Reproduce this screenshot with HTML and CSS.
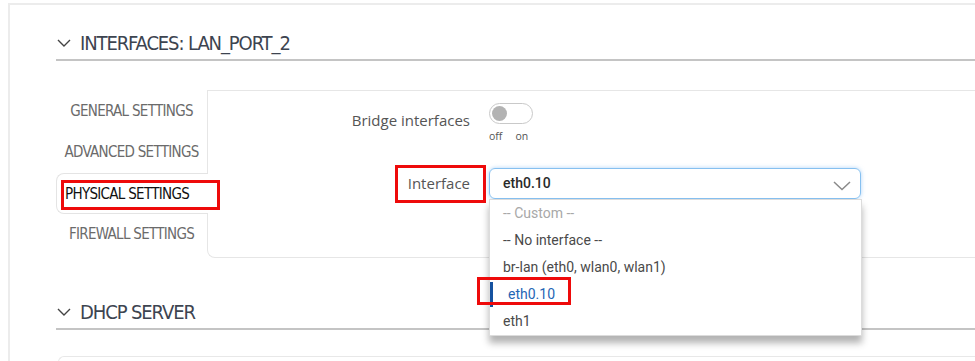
FILE: index.html
```html
<!DOCTYPE html>
<html lang="en">

<head>
    <meta charset="UTF-8">
    <meta name="viewport" content="width=device-width, initial-scale=1.0">
    <title>Interfaces: LAN_PORT_2</title>
    <link rel="stylesheet" href="styles.css">
</head>

<body>
    <div class="card">
        <div class="section-head">
            <svg class="chevron" width="14" height="8" viewBox="0 0 14 8">
                <polyline points="1,1 7,7 13,1" />
            </svg>
            <h2>INTERFACES: LAN_PORT_2</h2>
        </div>

        <div class="tabs-wrap">
            <ul class="tabs">
                <li>GENERAL SETTINGS</li>
                <li>ADVANCED SETTINGS</li>
                <li class="active"><span class="mark mark-tab">PHYSICAL SETTINGS</span></li>
                <li>FIREWALL SETTINGS</li>
            </ul>

            <div class="panel">
                <div class="field field-bridge">
                    <label>Bridge interfaces</label>
                    <div>
                        <div class="switch"><span class="knob"></span></div>
                        <div class="switch-labels">
                            <small>off</small>
                            <small>on</small>
                        </div>
                    </div>
                </div>

                <div class="field field-iface">
                    <label><span class="mark mark-label">Interface</span></label>
                    <div class="select">
                        <span class="value">eth0.10</span>
                        <svg class="select-arrow" width="18" height="10" viewBox="0 0 18 10">
                            <polyline points="1,1 9,8.5 17,1" />
                        </svg>
                        <ul class="options">
                            <li class="muted">-- Custom --</li>
                            <li>-- No interface --</li>
                            <li>br-lan (eth0, wlan0, wlan1)</li>
                            <li class="current"><span class="mark mark-option">eth0.10</span></li>
                            <li>eth1</li>
                        </ul>
                    </div>
                </div>
            </div>
        </div>

        <div class="section-head section-dhcp">
            <svg class="chevron" width="14" height="8" viewBox="0 0 14 8">
                <polyline points="1,1 7,7 13,1" />
            </svg>
            <h2>DHCP SERVER</h2>
        </div>

        <div class="next-card"></div>
    </div>
</body>

</html>
```

FILE: styles.css
```css
* {
    box-sizing: border-box;
    margin: 0;
    padding: 0;
}

body {
    background-color: #fff;
    font-family: 'Open Sans', sans-serif;
    color: #555;
    overflow: hidden;
}

.card {
    margin: 3px 0 0 8px;
    border-top: 2px solid #ececec;
    border-left: 2px solid #ececec;
    padding-left: 46px;
    height: 400px;
}

.section-head {
    display: flex;
    align-items: center;
    height: 34px;
    margin-top: 22px;
    border-bottom: 2px solid #c4c4c4;
}

.section-head h2 {
    font-family: 'Liberation Sans Narrow', 'DejaVu Sans Condensed', sans-serif;
    font-weight: 400;
    font-size: 20px;
    letter-spacing: -1.1px;
    color: #3d4450;
    margin-left: 9px;
}

.chevron {
    margin-left: 1px;
    fill: none;
    stroke: #444;
    stroke-width: 1.4;
}

.tabs-wrap {
    display: flex;
    margin-top: 29px;
}

.tabs {
    list-style-type: none;
    width: 151px;
    flex-shrink: 0;
    padding-top: 1px;
}

.tabs li {
    height: 41px;
    line-height: 41px;
    text-align: center;
    font-family: 'Liberation Sans Narrow', 'DejaVu Sans Condensed', sans-serif;
    font-size: 15px;
    letter-spacing: -0.7px;
    color: #6b6b6b;
    white-space: nowrap;
}

.tabs li.active {
    position: relative;
    z-index: 1;
    margin-right: -1px;
    background-color: #fff;
    border: 1px solid #e4e4e4;
    border-right: 0;
    border-radius: 8px 0 0 8px;
    color: #111;
    text-align: left;
    padding-left: 8px;
}

.panel {
    flex: 1;
    height: 168px;
    border: 1px solid #e6e6e6;
    border-right: 0;
    border-bottom-left-radius: 8px;
    padding-top: 12px;
}

.field {
    display: grid;
    grid-template-columns: 262px 372px;
    column-gap: 19px;
    align-items: start;
}

.field label {
    text-align: right;
    font-size: 15px;
    color: #555;
}

.field-bridge label {
    line-height: 20px;
    padding-top: 7px;
}

.field-iface {
    margin-top: 25px;
}

.field-iface label {
    line-height: 30px;
}

.switch {
    position: relative;
    width: 44px;
    height: 21px;
    border: 1.5px solid #c9c9c9;
    border-radius: 11px;
    background-color: #fff;
}

.knob {
    position: absolute;
    top: 1.5px;
    left: 2px;
    width: 15px;
    height: 15px;
    border-radius: 50%;
    background-color: #b3b3b3;
}

.switch-labels {
    display: flex;
    gap: 13px;
    margin-top: 5px;
    line-height: 14px;
}

.switch-labels small {
    font-size: 10.5px;
    color: #555;
}

.select {
    position: relative;
    height: 31px;
    border: 1px solid #86c0f0;
    border-radius: 6px;
    box-shadow: 0 0 4px rgba(110, 175, 240, 0.55);
    font-family: Roboto, 'Liberation Sans', sans-serif;
}

.select .value {
    display: block;
    padding-left: 13px;
    line-height: 29px;
    font-size: 14px;
    font-weight: 500;
    color: #2a2a2a;
}

.select-arrow {
    position: absolute;
    top: 12px;
    right: 9px;
    fill: none;
    stroke: #8a8a8a;
    stroke-width: 1.5;
}

.options {
    position: absolute;
    z-index: 2;
    top: 30px;
    left: -1px;
    width: 373px;
    list-style-type: none;
    background-color: #fff;
    border: 1px solid #dcdcdc;
    box-shadow: 0 7px 7px rgba(0, 0, 0, 0.3);
}

.options li {
    height: 27px;
    line-height: 27px;
    padding-left: 13px;
    font-size: 14px;
    color: #4a4a4a;
    white-space: nowrap;
}

.options li.muted {
    color: #a8a8a8;
}

.options li.current {
    border-left: 3px solid #1552a0;
    padding-left: 15px;
    color: #1f66b5;
    line-height: 25px;
    height: 25px;
    margin: 1px 0;
}

.mark {
    position: relative;
    display: inline-block;
    line-height: 20px;
}

.mark::after {
    content: '';
    position: absolute;
    border: 3px solid #ee0a0a;
}

.mark-tab::after {
    top: -4px;
    bottom: -6px;
    left: -4px;
    right: -31px;
}

.mark-label::after {
    top: -8px;
    bottom: -10px;
    left: -13px;
    right: -16px;
}

.mark-option::after {
    top: -7px;
    bottom: -1px;
    left: -31px;
    right: -16px;
}

.section-dhcp {
    margin-top: 38px;
}

.next-card {
    margin: 26px 0 0 2px;
    border-top: 1px solid #e8e8e8;
    border-left: 1px solid #e8e8e8;
    border-top-left-radius: 6px;
    height: 20px;
}
```
